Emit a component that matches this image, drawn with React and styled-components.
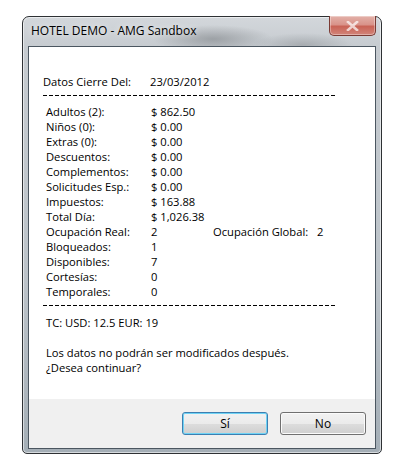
import React from 'react';
import styled, { createGlobalStyle } from 'styled-components';

const GlobalStyle = createGlobalStyle`
  body {
    margin: 0;
    background: #fff;
    font-family: "Open Sans", "Noto Sans", sans-serif;
  }
`;

const Page = styled.div`
  padding: 16px 0 0 22px;
`;

const Window = styled.div`
  box-sizing: border-box;
  width: 360px;
  height: 438px;
  border: 1px solid #2e3134;
  border-radius: 7px 7px 5px 5px;
  padding: 0 5px 4px 5px;
  display: flex;
  flex-direction: column;
  background:
    radial-gradient(ellipse 60px 14px at 190px 22px, rgba(120,124,128,0.55), transparent),
    radial-gradient(ellipse 50px 12px at 280px 28px, rgba(130,134,138,0.45), transparent),
    linear-gradient(to bottom, #d3d7db 0px, #c6cbd0 30px, #bcc3c9 60%, #a4aeb6 100%);
  box-shadow: inset 0 0 0 1px rgba(255,255,255,0.55);
`;

const TitleBar = styled.div`
  height: 29px;
  display: flex;
  justify-content: space-between;
  align-items: flex-start;
`;

const Title = styled.div`
  padding: 6px 0 0 3px;
  font-size: 12px;
  line-height: 16px;
  color: #000;
  text-shadow: 0 0 6px rgba(255,255,255,0.9);
`;

const CloseButton = styled.div`
  box-sizing: border-box;
  width: 47px;
  height: 20px;
  margin-top: -1px;
  border: 1px solid #7a3a33;
  border-top: none;
  border-radius: 0 0 5px 5px;
  background: linear-gradient(to bottom, #e3b1a9 0%, #d9938a 45%, #c96356 55%, #d2857a 100%);
  box-shadow: inset 0 0 0 1px rgba(255,255,255,0.35);
  display: flex;
  align-items: center;
  justify-content: center;
`;

const Client = styled.div`
  flex: 1;
  border: 1px solid #4b5660;
  background: #fff;
  display: flex;
  flex-direction: column;
`;

const Content = styled.div`
  padding: 27px 0 0 14px;
  font-size: 11.2px;
  line-height: 15px;
  color: #000;
`;

const Row = styled.div`
  display: flex;
  padding-left: ${({ indent }) => indent ? '3px' : '0'};
`;

const Cell = styled.span`
  width: ${({ w }) => w ? `${w}px` : 'auto'};
  flex-shrink: 0;
  white-space: nowrap;
`;

const Dashes = styled.div`
  width: 293px;
  height: 1px;
  margin: ${({ m }) => m};
  background: repeating-linear-gradient(to right, #000 0 4px, transparent 4px 6px);
`;

const Para = styled.div`
  margin-top: ${({ top }) => top}px;
`;

const Footer = styled.div`
  margin-top: auto;
  height: 49px;
  background: #f0f0f0;
  display: flex;
  justify-content: flex-end;
  align-items: center;
  gap: 12px;
  padding-right: 9px;
`;

const Button = styled.button`
  box-sizing: border-box;
  width: 86px;
  height: 23px;
  font-family: inherit;
  font-size: 12px;
  color: #000;
  border-radius: 3px;
  border: 1px solid ${({ primary }) => primary ? '#3c7fb1' : '#707070'};
  background: linear-gradient(to bottom, #f2f2f2 0%, #ebebeb 50%, #dddddd 51%, #cfcfcf 100%);
  box-shadow: inset 0 0 0 1px ${({ primary }) => primary ? '#6fd3f5' : '#fbfbfb'};
  padding: 0;
`;

const rows = [
  ['Adultos (2):', '$ 862.50'],
  ['Niños (0):', '$ 0.00'],
  ['Extras (0):', '$ 0.00'],
  ['Descuentos:', '$ 0.00'],
  ['Complementos:', '$ 0.00'],
  ['Solicitudes Esp.:', '$ 0.00'],
  ['Impuestos:', '$ 163.88'],
  ['Total Día:', '$ 1,026.38'],
];

const counts = [
  ['Bloqueados:', '1'],
  ['Disponibles:', '7'],
  ['Cortesías:', '0'],
  ['Temporales:', '0'],
];

export default function App() {
  return (
    <Page>
      <GlobalStyle />
      <Window>
        <TitleBar>
          <Title>HOTEL DEMO - AMG Sandbox</Title>
          <CloseButton>
            <svg width="13" height="10" viewBox="0 0 13 10">
              <path d="M2 1 L11 9 M11 1 L2 9" stroke="rgba(255,255,255,0.7)" strokeWidth="2.6" strokeLinecap="square" />
            </svg>
          </CloseButton>
        </TitleBar>
        <Client>
          <Content>
            <Row>
              <Cell w={107}>Datos Cierre Del:</Cell>
              <Cell>23/03/2012</Cell>
            </Row>
            <Dashes m="6px 0 8px 0" />
            {rows.map(([label, value]) => (
              <Row indent key={label}>
                <Cell w={105}>{label}</Cell>
                <Cell>{value}</Cell>
              </Row>
            ))}
            <Row indent>
              <Cell w={105}>Ocupación Real:</Cell>
              <Cell w={62}>2</Cell>
              <Cell w={104}>Ocupación Global:</Cell>
              <Cell>2</Cell>
            </Row>
            {counts.map(([label, value]) => (
              <Row indent key={label}>
                <Cell w={105}>{label}</Cell>
                <Cell>{value}</Cell>
              </Row>
            ))}
            <Dashes m="6px 0 9px 0" />
            <Row indent>TC: USD: 12.5 EUR: 19</Row>
            <Para top={15}>
              <Row indent>Los datos no podrán ser modificados después.</Row>
              <Row indent>¿Desea continuar?</Row>
            </Para>
          </Content>
          <Footer>
            <Button primary>Sí</Button>
            <Button>No</Button>
          </Footer>
        </Client>
      </Window>
    </Page>
  );
}
